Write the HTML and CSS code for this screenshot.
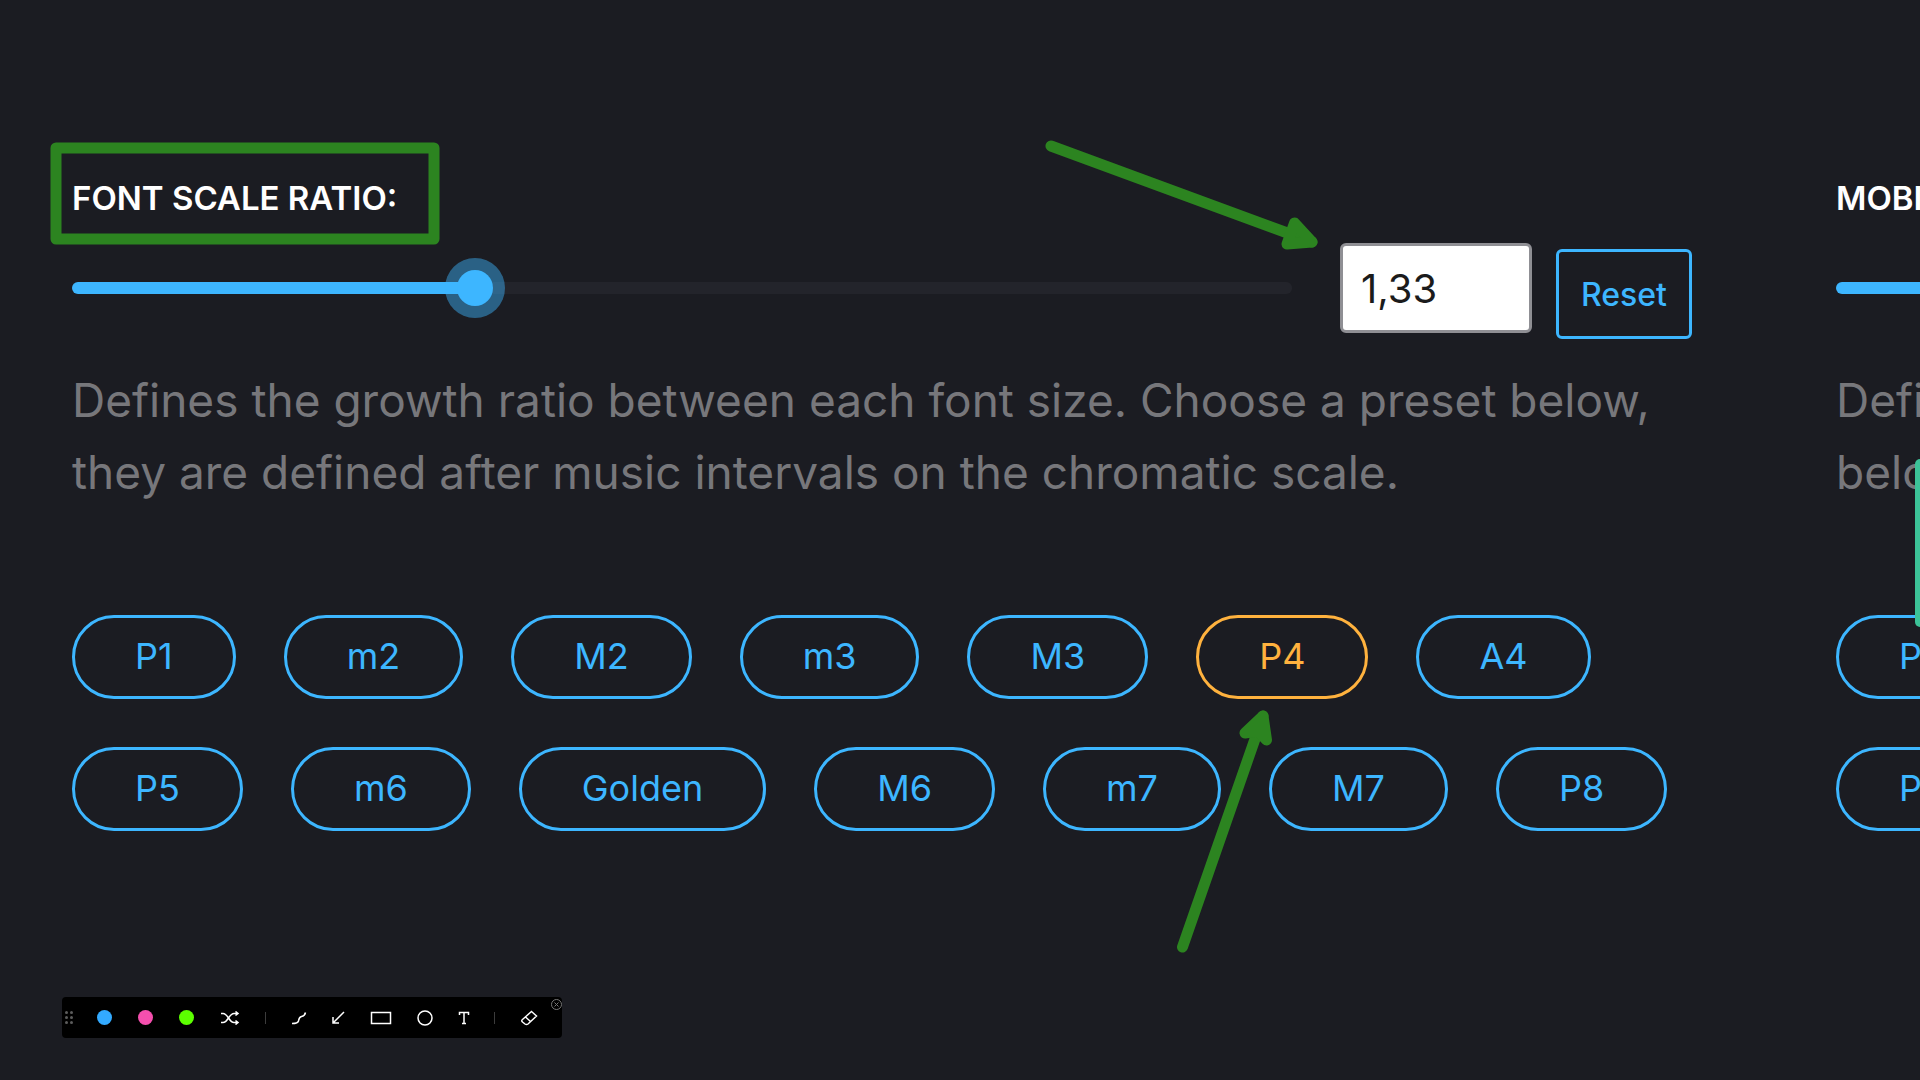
FILE: index.html
```
<!DOCTYPE html>
<html lang="en">
<head>
<meta charset="utf-8">
<meta name="viewport" content="width=device-width, initial-scale=1">
<title>Font scale ratio</title>
<link rel="stylesheet" href="styles.css">
</head>
<body>
<main class="settings">
  <section class="setting">
    <label class="setting-label" for="ratio">FONT SCALE RATIO:</label>
    <div class="control-row">
      <div class="slider" style="--fill: 33%">
        <input class="slider-input" id="ratio" type="range" min="1" max="2" step="0.01" value="1.33">
      </div>
      <input class="number" type="text" inputmode="decimal" aria-label="Font scale ratio value" value="1,33">
      <button class="reset" type="button">Reset</button>
    </div>
    <p class="description">Defines the growth ratio between each font size. Choose a preset below, they are defined after music intervals on the chromatic scale.</p>
    <div class="presets">
      <button class="preset" type="button">P1</button>
      <button class="preset" type="button">m2</button>
      <button class="preset" type="button">M2</button>
      <button class="preset" type="button">m3</button>
      <button class="preset" type="button">M3</button>
      <button class="preset preset-active" type="button">P4</button>
      <button class="preset" type="button">A4</button>
      <button class="preset" type="button">P5</button>
      <button class="preset" type="button">m6</button>
      <button class="preset" type="button">Golden</button>
      <button class="preset" type="button">M6</button>
      <button class="preset" type="button">m7</button>
      <button class="preset" type="button">M7</button>
      <button class="preset" type="button">P8</button>
    </div>
  </section>
  <section class="setting">
    <label class="setting-label" for="mobile-ratio">MOBI</label>
    <div class="control-row">
      <div class="slider" style="--fill: 33%">
        <input class="slider-input" id="mobile-ratio" type="range" min="1" max="2" step="0.01" value="1.33">
      </div>
    </div>
    <p class="description">Defi<br>belo</p>
    <div class="presets presets-stacked">
      <button class="preset" type="button">P1</button>
      <button class="preset" type="button">P5</button>
    </div>
  </section>
</main>

<div class="side-tab"></div>

<svg class="annotations" width="1920" height="1080" viewBox="0 0 1920 1080" aria-hidden="true">
  <rect x="56" y="148" width="378" height="91"/>
  <path d="M1051 146 L1312 242"/>
  <path class="head" d="M1294.500 223 L1312 242 L1287 244 Z"/>
  <path d="M1182.500 947 L1263 716"/>
  <path class="head" d="M1245 733 L1263 716 L1266.500 740 L1258 731 Z"/>
</svg>

<div class="toolbar" role="toolbar" aria-label="Drawing tools">
  <svg class="grip" width="9" height="13" viewBox="0 0 9 13"><g fill="#5c5c5c"><circle cx="1.500" cy="1.500" r="1.500"/><circle cx="6.500" cy="1.500" r="1.500"/><circle cx="1.500" cy="6.500" r="1.500"/><circle cx="6.500" cy="6.500" r="1.500"/><circle cx="1.500" cy="11.500" r="1.500"/><circle cx="6.500" cy="11.500" r="1.500"/></g></svg>
  <div class="swatches">
    <button class="swatch blue" type="button" aria-label="Blue"></button>
    <button class="swatch pink" type="button" aria-label="Pink"></button>
    <button class="swatch green" type="button" aria-label="Green"></button>
  </div>
  <button class="tool" type="button" aria-label="Random color"><svg width="20" height="14" viewBox="0 0 20 14"><path d="M1 2.500 H3 C8 2.500 9 11.500 14 11.500 H18 M1 11.500 H3 C8 11.500 9 2.500 14 2.500 H18 M15.500 0.500 L18 2.500 L15.500 4.500 M15.500 9.500 L18 11.500 L15.500 13.500"/></svg></button>
  <span class="divider"></span>
  <button class="tool" type="button" aria-label="Pen"><svg width="16" height="14" viewBox="0 0 16 14"><path d="M1 12.500 C4 12.500 7 12.500 7.500 10 C8 8 8 6 10.500 5.500 C13 5 14 4 14.500 1.500"/></svg></button>
  <button class="tool" type="button" aria-label="Arrow"><svg width="14" height="14" viewBox="0 0 14 14"><path d="M13 1 L2 12 M2 6 V12 H8"/></svg></button>
  <button class="tool" type="button" aria-label="Rectangle"><svg width="22" height="14" viewBox="0 0 22 14"><rect x="1.500" y="1.500" width="19" height="11"/></svg></button>
  <button class="tool" type="button" aria-label="Ellipse"><svg width="16" height="16" viewBox="0 0 16 16"><circle cx="8" cy="8" r="7"/></svg></button>
  <button class="tool" type="button" aria-label="Text"><svg width="12" height="14" viewBox="0 0 12 14"><path d="M1.500 4 V1.500 H10.500 V4 M6 1.500 V12.500 M4 12.500 H8"/></svg></button>
  <span class="divider"></span>
  <button class="tool" type="button" aria-label="Eraser"><svg width="18" height="16" viewBox="0 0 18 16"><path d="M11.500 1.500 L16.500 6 L8 14 Q6.500 15 5 14 L2.500 12 Q1 10.500 2.500 9.500 Z M5.500 7 L10.500 11.500"/></svg></button>
  <button class="close" type="button" aria-label="Close"><svg width="11" height="11" viewBox="0 0 11 11"><circle cx="5.500" cy="5.500" r="5"/><path d="M3.500 3.500 L7.500 7.500 M7.500 3.500 L3.500 7.500"/></svg></button>
</div>
</body>
</html>
```
FILE: styles.css
```
:root {
  --bg: #1b1c22;
  --blue: #3db6ff;
  --orange: #ffb23e;
  --mark: #2c8420;
}

* { box-sizing: border-box; }

body {
  margin: 0;
  min-height: 100vh;
  overflow: hidden;
  background: var(--bg);
  color: #fff;
  font-family: Inter, "Noto Sans", sans-serif;
}

button, input { font-family: inherit; }

.settings {
  display: grid;
  grid-auto-flow: column;
  grid-auto-columns: calc(100% - 228px);
  gap: 144px;
  padding: 174px 0 0 72px;
}

.setting-label {
  display: block;
  margin-bottom: 21px;
  font-size: 33px;
  font-weight: 600;
  line-height: 48px;
}

.control-row {
  display: flex;
  align-items: flex-start;
  min-height: 96px;
}

.slider {
  flex: 1;
  height: 12px;
  margin: 39px 48px 0 0;
  border-radius: 6px;
  background: linear-gradient(to right, var(--blue) var(--fill), #23242b var(--fill));
}

/* The input overhangs the track by half a thumb on each side. */
.slider-input {
  appearance: none;
  display: block;
  width: calc(100% + 36px);
  height: 36px;
  margin: -12px -18px;
  background: transparent;
}

.slider-input::-webkit-slider-thumb {
  appearance: none;
  width: 36px;
  height: 36px;
  border-radius: 50%;
  background: var(--blue);
  box-shadow: 0 0 0 12px rgba(61, 182, 255, 0.45);
}

.number {
  width: 192px;
  height: 90px;
  margin-right: 24px;
  padding: 0 18px;
  border: 3px solid #8f8f94;
  border-radius: 6px;
  background: #fff;
  color: #1b1b1b;
  font-size: 40px;
}

.reset {
  height: 90px;
  margin-top: 6px;
  padding: 0 22px;
  border: 3px solid var(--blue);
  border-radius: 6px;
  background: transparent;
  color: var(--blue);
  font-size: 32px;
  font-weight: 500;
}

.description {
  margin: 25px 0 107px;
  color: #77777b;
  font-size: 46px;
  line-height: 72px;
}

.presets {
  display: flex;
  flex-wrap: wrap;
  gap: 48px;
}

.presets-stacked {
  flex-direction: column;
  align-items: flex-start;
}

.preset {
  height: 84px;
  padding: 0 60px 2px;
  border: 3px solid var(--blue);
  border-radius: 42px;
  background: transparent;
  color: var(--blue);
  font-size: 36px;
}

.preset-active {
  border-color: var(--orange);
  color: var(--orange);
}

.side-tab {
  position: fixed;
  top: 459px;
  right: 0;
  width: 5px;
  height: 168px;
  border-radius: 6px 0 0 6px;
  background: #3cc398;
}

.annotations {
  position: absolute;
  top: 0;
  left: 0;
  pointer-events: none;
  fill: none;
  stroke: var(--mark);
  stroke-width: 11px;
  stroke-linecap: round;
  stroke-linejoin: round;
}

.annotations .head { fill: var(--mark); }

.toolbar {
  position: fixed;
  left: 62px;
  bottom: 42px;
  display: flex;
  align-items: center;
  justify-content: space-between;
  width: 500px;
  height: 41px;
  padding: 0 24px 0 3px;
  border-radius: 4px;
  background: #000;
}

.swatches {
  display: flex;
  gap: 26px;
  margin: 0 2px 0 -2px;
}

.swatch {
  width: 15px;
  height: 15px;
  padding: 0;
  border: 0;
  border-radius: 50%;
}

.blue { background: #33aaff; }
.pink { background: #f54fae; }
.green { background: #5cff00; }

.tool, .close {
  display: flex;
  padding: 0;
  border: 0;
  background: transparent;
  fill: none;
  stroke: #fff;
  stroke-width: 1.5px;
}

.divider {
  width: 1px;
  height: 12px;
  background: #3c3c3c;
}

.close {
  position: absolute;
  top: 2px;
  right: 0;
  stroke: #777;
  stroke-width: 1px;
}
```
